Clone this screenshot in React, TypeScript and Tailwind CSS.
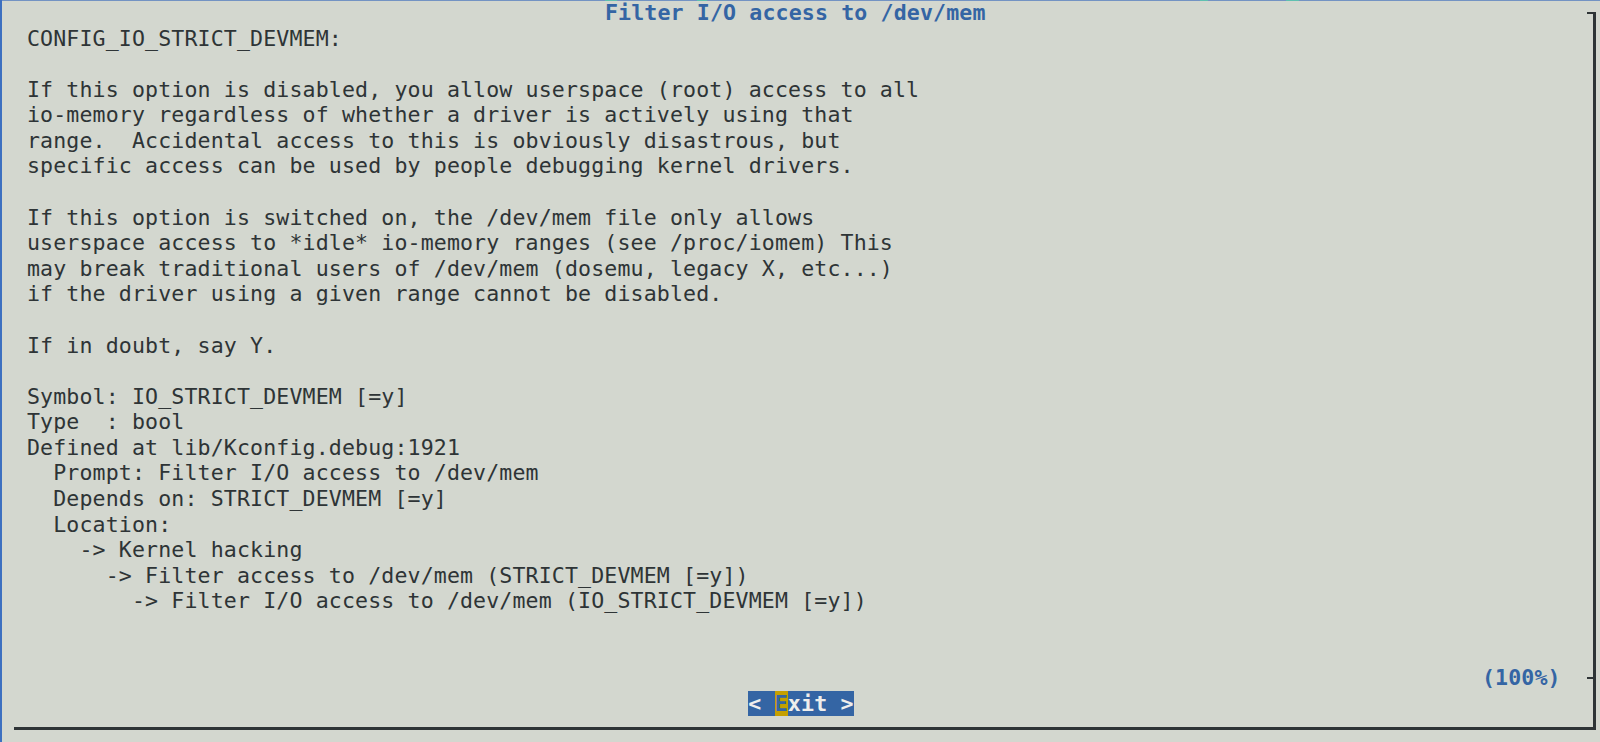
import React from "react";

const lines = [
  "CONFIG_IO_STRICT_DEVMEM:",
  "",
  "If this option is disabled, you allow userspace (root) access to all",
  "io-memory regardless of whether a driver is actively using that",
  "range.  Accidental access to this is obviously disastrous, but",
  "specific access can be used by people debugging kernel drivers.",
  "",
  "If this option is switched on, the /dev/mem file only allows",
  "userspace access to *idle* io-memory ranges (see /proc/iomem) This",
  "may break traditional users of /dev/mem (dosemu, legacy X, etc...)",
  "if the driver using a given range cannot be disabled.",
  "",
  "If in doubt, say Y.",
  "",
  "Symbol: IO_STRICT_DEVMEM [=y]",
  "Type  : bool",
  "Defined at lib/Kconfig.debug:1921",
  "  Prompt: Filter I/O access to /dev/mem",
  "  Depends on: STRICT_DEVMEM [=y]",
  "  Location:",
  "    -> Kernel hacking",
  "      -> Filter access to /dev/mem (STRICT_DEVMEM [=y])",
  "        -> Filter I/O access to /dev/mem (IO_STRICT_DEVMEM [=y])",
  "",
  "",
];

export default function App() {
  return (
    <div className="relative flex h-[742px] w-[1600px] flex-col overflow-hidden bg-[#d3d7cf] font-['DejaVu_Sans_Mono','Liberation_Mono',monospace] text-[21.59px] leading-[25.586px] tracking-[0.13px] text-[#2e3436]">
      <div className="relative ml-[14px] mt-[12.8px] flex h-[717.5px] w-[1581.5px] shrink-0 flex-col border-r-[3px] border-b-[3px] border-[#2e3436]">
        <div className="-mt-[12.8px] h-[25.586px] shrink-0 whitespace-pre pl-[591px] font-bold text-[#3465a4]">
          Filter I/O access to /dev/mem
        </div>
        <div className="flex h-[639.65px] shrink-0 flex-col pl-[13px]">
          {lines.map((l, i) => (
            <div key={i} className="h-[25.586px] shrink-0 whitespace-pre">
              {l}
            </div>
          ))}
        </div>
        <div className="h-[25.586px] shrink-0 whitespace-pre pl-[1468px] font-bold text-[#3465a4]">
          (100%)
        </div>
        <div className="flex h-[25.586px] shrink-0 pl-[734.3px]">
          <span className="flex h-full whitespace-pre bg-[#3465a4] font-bold tracking-[0.175px] text-[#eeeeec]">
            <span>{"< "}</span>
            <span className="bg-[#c4a000] text-[#3465a4]">E</span>
            <span>{"xit >"}</span>
          </span>
        </div>
        <span className="absolute right-[-3px] top-[-1.1px] h-[2.3px] w-[8.2px] bg-[#2e3436]" />
        <span className="absolute right-0 top-[663.9px] h-[2.3px] w-[6px] bg-[#2e3436]" />
      </div>
      <span className="absolute left-0 top-0 h-[1px] w-[1600px] bg-[#7393c3]" />
      <span className="absolute left-[605px] top-0 h-[1px] w-[12px] bg-[#5fc0b0]" />
      <span className="absolute left-[697px] top-0 h-[1px] w-[10px] bg-[#5fc0b0]" />
      <span className="absolute left-[1200px] top-0 h-[1px] w-[8px] bg-[#5fc0b0]" />
      <span className="absolute left-[1286px] top-0 h-[1px] w-[13px] bg-[#5fc0b0]" />
      <span className="absolute left-0 top-0 h-[742px] w-[2px] bg-[#3d70c0]" />
    </div>
  );
}
